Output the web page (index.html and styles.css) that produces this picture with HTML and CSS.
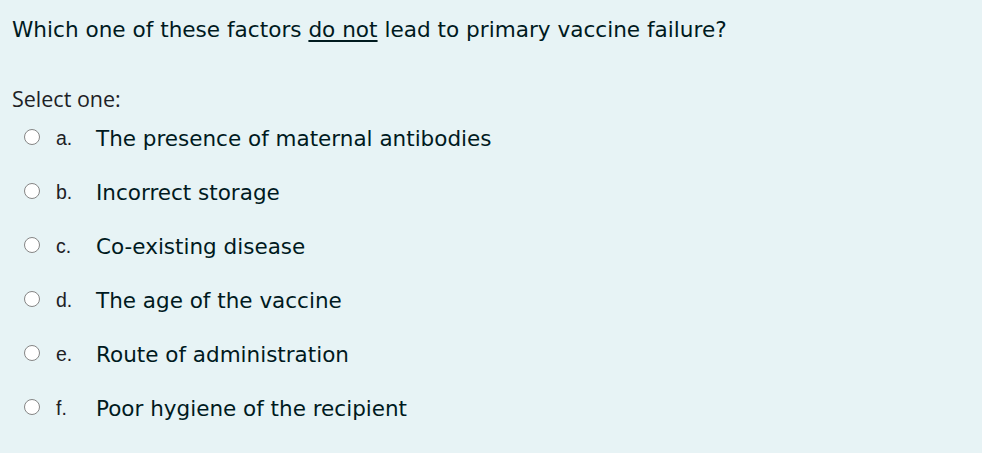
FILE: index.html
```html
<!DOCTYPE html>
<html>
<head>
<meta charset="utf-8">
<link rel="stylesheet" href="styles.css">
</head>
<body>
<div class="que">
  <div class="qtext">Which one of these factors <u>do not</u> lead to primary vaccine failure?</div>
  <div class="prompt">Select one:</div>
  <div class="answers">
    <div class="opt"><span class="radio"></span><span class="letter">a.</span><span class="atext">The presence of maternal antibodies</span></div>
    <div class="opt"><span class="radio"></span><span class="letter">b.</span><span class="atext">Incorrect storage</span></div>
    <div class="opt"><span class="radio"></span><span class="letter">c.</span><span class="atext">Co-existing disease</span></div>
    <div class="opt"><span class="radio"></span><span class="letter">d.</span><span class="atext">The age of the vaccine</span></div>
    <div class="opt"><span class="radio"></span><span class="letter">e.</span><span class="atext">Route of administration</span></div>
    <div class="opt"><span class="radio"></span><span class="letter">f.</span><span class="atext">Poor hygiene of the recipient</span></div>
  </div>
</div>
</body>
</html>
```
FILE: styles.css
```css
html, body {
  margin: 0;
  padding: 0;
  background: #e7f3f5;
}
.que {
  padding: 16px 12px 0 12px;
  color: #001a1e;
  font-family: "DejaVu Sans", sans-serif;
}
.qtext {
  font-size: 21.6px;
  line-height: 28px;
}
.qtext u {
  text-underline-offset: 3px;
  text-decoration-thickness: 2px;
}
.prompt {
  margin-top: 43px;
  font-family: "Open Sans", sans-serif;
  font-size: 21.5px;
  line-height: 24px;
  color: #1d2125;
}
.opt {
  display: flex;
  align-items: center;
  height: 54px;
}
.radio {
  width: 16px;
  height: 16px;
  border: 1.5px solid #858585;
  border-radius: 50%;
  background: #fff;
  margin-left: 12px;
  margin-top: -3px;
  box-sizing: border-box;
  flex: none;
}
.letter {
  font-family: "Liberation Sans", sans-serif;
  font-size: 19.5px;
  width: 56px;
  padding-left: 16px;
  box-sizing: border-box;
  color: #1d2125;
  flex: none;
}
.atext {
  font-size: 21.5px;
}
```
